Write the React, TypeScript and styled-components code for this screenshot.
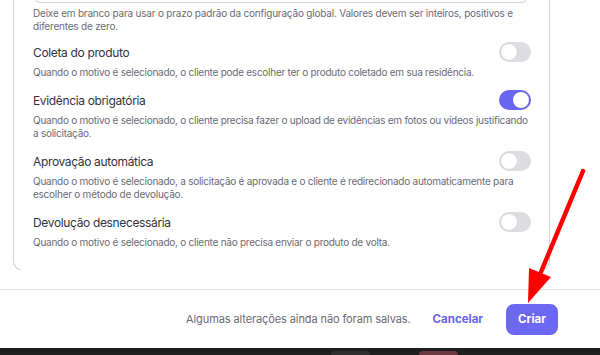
import React from 'react';
import styled, { createGlobalStyle } from 'styled-components';

const GlobalStyle = createGlobalStyle`
  html, body {
    margin: 0;
    padding: 0;
    background: #ffffff;
    font-family: Inter, "Noto Sans", sans-serif;
  }
  body {
    width: 600px;
    height: 355px;
    overflow: hidden;
  }
`;

const Page = styled.div`
  position: relative;
  width: 600px;
  height: 355px;
  display: flex;
  flex-direction: column;
  overflow: hidden;
`;

const Scroller = styled.div`
  flex: 1;
  overflow: hidden;
  padding: 0 50px 0 13px;
`;

// card is scrolled so only the bottom of the input is visible
const Card = styled.div`
  margin-top: -35px;
  border: 1px solid #cfcfd7;
  border-top: none;
  border-radius: 0 0 10px 10px;
  padding: 0 18px 21px 19px;
`;

const Input = styled.div`
  height: 36px;
  border: 1px solid #cfcfd7;
  border-radius: 8px;
  margin: 0 2px 0 0;
`;

const Hint = styled.p`
  margin: 4px 0 9px;
  font-size: 10px;
  line-height: 13px;
  letter-spacing: -0.2px;
  color: #6b6b78;
`;

const Row = styled.div`
  & + & {
    margin-top: 11px;
  }
`;

const RowHead = styled.div`
  display: flex;
  align-items: center;
  justify-content: space-between;
  height: 20px;
`;

const Label = styled.span`
  font-size: 12px;
  letter-spacing: -0.35px;
  color: #33333b;
`;

const Desc = styled.p`
  margin: 4px 0 0;
  font-size: 10px;
  line-height: 13px;
  letter-spacing: -0.25px;
  color: #6b6b78;
`;

const Switch = styled.span<{ $on?: boolean }>`
  position: relative;
  width: 32px;
  height: 20px;
  border-radius: 10px;
  background: ${p => (p.$on ? '#6a66f1' : '#dcdce1')};
  flex-shrink: 0;

  &::after {
    content: '';
    position: absolute;
    top: 2px;
    left: ${p => (p.$on ? '14px' : '2px')};
    width: 16px;
    height: 16px;
    border-radius: 50%;
    background: #ffffff;
    box-shadow: 0 0 0 0.5px rgba(0, 0, 0, 0.08);
  }
`;

const Footer = styled.div`
  border-top: 1px solid #e3e3e8;
  margin-top: 19px;
  height: 58px;
  display: flex;
  align-items: center;
  justify-content: flex-end;
  padding: 0 42px 0 0;
  flex-shrink: 0;
`;

const Note = styled.span`
  font-size: 11px;
  letter-spacing: -0.1px;
  color: #6b6b78;
  margin-right: 22px;
`;

const TextButton = styled.button`
  border: none;
  background: none;
  padding: 0;
  font-family: inherit;
  font-size: 11.5px;
  font-weight: 700;
  color: #6762f0;
  margin-right: 23px;
`;

const PrimaryButton = styled.button`
  border: none;
  border-radius: 8px;
  width: 52px;
  height: 31px;
  background: #6c68f2;
  color: #ffffff;
  font-family: inherit;
  font-size: 11.5px;
  font-weight: 700;
`;

const Taskbar = styled.div`
  height: 7px;
  background: #1e1e1f;
  display: flex;
  align-items: flex-end;
  padding-left: 331px;
  gap: 49px;
  flex-shrink: 0;
`;

const TaskTab = styled.span<{ $color: string }>`
  width: 39px;
  height: 4px;
  border-radius: 6px 6px 0 0;
  background: ${p => p.$color};
`;

const Arrow = styled.svg`
  position: absolute;
  left: 0;
  top: 0;
  pointer-events: none;
`;

const options = [
  {
    label: 'Coleta do produto',
    desc: 'Quando o motivo é selecionado, o cliente pode escolher ter o produto coletado em sua residência.',
    on: false,
  },
  {
    label: 'Evidência obrigatória',
    desc: 'Quando o motivo é selecionado, o cliente precisa fazer o upload de evidências em fotos ou vídeos justificando a solicitação.',
    on: true,
  },
  {
    label: 'Aprovação automática',
    desc: 'Quando o motivo é selecionado, a solicitação é aprovada e o cliente é redirecionado automaticamente para escolher o método de devolução.',
    on: false,
  },
  {
    label: 'Devolução desnecessária',
    desc: 'Quando o motivo é selecionado, o cliente não precisa enviar o produto de volta.',
    on: false,
  },
];

const App: React.FC = () => {
  return (
    <Page>
      <GlobalStyle />
      <Scroller>
        <Card>
          <Input />
          <Hint>
            Deixe em branco para usar o prazo padrão da configuração global. Valores devem ser inteiros, positivos e
            diferentes de zero.
          </Hint>
          {options.map(o => (
            <Row key={o.label}>
              <RowHead>
                <Label>{o.label}</Label>
                <Switch $on={o.on} />
              </RowHead>
              <Desc>{o.desc}</Desc>
            </Row>
          ))}
        </Card>
      </Scroller>
      <Footer>
        <Note>Algumas alterações ainda não foram salvas.</Note>
        <TextButton type="button">Cancelar</TextButton>
        <PrimaryButton type="button">Criar</PrimaryButton>
      </Footer>
      <Taskbar>
        <TaskTab $color="#2f2f30" />
        <TaskTab $color="#6a3a40" />
      </Taskbar>

      {/* annotation arrow */}
      <Arrow width="600" height="355" viewBox="0 0 600 355">
        <line x1="583" y1="171" x2="541" y2="272" stroke="#ff0000" strokeWidth="4.5" strokeLinecap="round" />
        <polygon points="529,268 551,277 528,303" fill="#ff0000" />
      </Arrow>
    </Page>
  );
};

export default App;
